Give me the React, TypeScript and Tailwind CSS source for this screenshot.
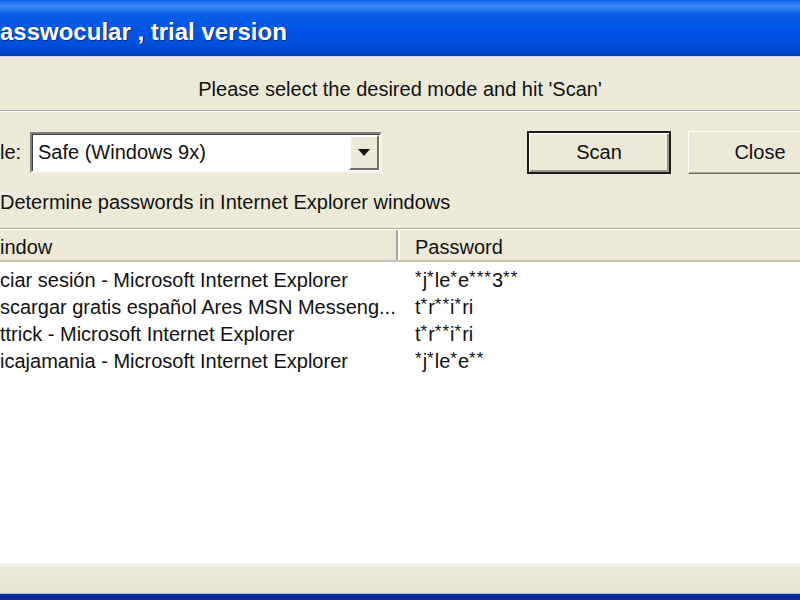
import React from "react";

const rows = [
  { w: "ciar sesión - Microsoft Internet Explorer", p: "*j*le*e***3**" },
  { w: "scargar gratis español Ares MSN Messeng...", p: "t*r**i*ri" },
  { w: "ttrick - Microsoft Internet Explorer", p: "t*r**i*ri" },
  { w: "icajamania - Microsoft Internet Explorer", p: "*j*le*e**" },
];

function Masked({ text }: { text: string }) {
  return (
    <>
      {text.split("").map((c, i) =>
        c === "*" ? (
          <span key={i} className="text-[17px] align-[4px] tracking-[1px]">
            *
          </span>
        ) : (
          <span key={i}>{c}</span>
        )
      )}
    </>
  );
}

export default function App() {
  return (
    <div
      className="w-[800px] h-[600px] overflow-hidden flex flex-col bg-[#ECE9D8] text-[#111]"
      style={{ fontFamily: '"Liberation Sans", Arial, sans-serif' }}
    >
      {/* Title bar */}
      <div className="h-[56px] shrink-0 flex items-center bg-[linear-gradient(to_bottom,#0a5fe6_0px,#3d8cf6_6px,#0a5de8_14px,#0055e5_30px,#0050dd_44px,#0044cc_52px,#003bb8_56px)]">
        <span className="text-white font-bold text-[24px] leading-none pt-[7px] [text-shadow:1px_1px_0_#0a2a80]">
          asswocular , trial version
        </span>
      </div>
      <div className="h-[1px] bg-[#c9d6f0] shrink-0" />

      {/* Instruction */}
      <div className="h-[53px] shrink-0 flex items-end justify-center pb-[11px]">
        <span className="text-[20px] leading-none">Please select the desired mode and hit 'Scan'</span>
      </div>
      <div className="h-[1px] bg-[#aca899] shrink-0" />
      <div className="h-[1px] bg-white shrink-0" />

      {/* Mode row */}
      <div className="flex items-center mt-[19px] h-[42px] shrink-0">
        <span className="text-[20px] leading-none w-[30px] shrink-0">le:</span>
        <div className="w-[352px] h-[41px] shrink-0 flex items-center bg-white border-[2px] border-t-[#808080] border-l-[#808080] border-b-[#f4f3ee] border-r-[#f4f3ee] shadow-[inset_1px_1px_0_#404040]">
          <span className="flex-1 pl-[6px] text-[20px] leading-none">Safe (Windows 9x)</span>
          <div className="w-[30px] h-[35px] mr-[1px] shrink-0 flex items-center justify-center bg-[#ECE9D8] border-[2px] border-t-white border-l-white border-b-[#716f64] border-r-[#716f64]">
            <svg width="12" height="7" viewBox="0 0 12 7">
              <path d="M0 0 H12 L6 7 Z" fill="#111" />
            </svg>
          </div>
        </div>
        <div className="ml-[145px] w-[144px] h-[43px] shrink-0 flex items-center justify-center border-[2px] border-[#1c1c1c] bg-[#ECE9D8] shadow-[inset_1px_1px_0_#fff,inset_-2px_-2px_0_#9a9889]">
          <span className="text-[20px] leading-none">Scan</span>
        </div>
        <div className="ml-[17px] w-[144px] h-[43px] shrink-0 flex items-center justify-center bg-[#ECE9D8] border-[1px] border-t-white border-l-white border-b-[#6f6d63] border-r-[#6f6d63] shadow-[inset_-1px_-1px_0_#aca899]">
          <span className="text-[20px] leading-none">Close</span>
        </div>
      </div>

      {/* Description */}
      <div className="h-[55px] shrink-0 flex items-center">
        <span className="text-[20px] leading-none pt-[2px]">Determine passwords in Internet Explorer windows</span>
      </div>
      <div className="h-[1px] bg-[#aca899] shrink-0" />
      <div className="h-[1px] bg-white shrink-0" />

      {/* List */}
      <div className="flex-1 flex flex-col bg-white min-h-0">
        <div className="h-[32px] shrink-0 flex bg-[#ECE9D8] border-b-[2px] border-[#c7c5b2]">
          <div className="w-[398px] flex items-center border-r-[2px] border-[#aca899] pt-[3px]">
            <span className="text-[20px] leading-none">indow</span>
          </div>
          <div className="flex-1 flex items-center pl-[15px] border-l-[2px] border-white pt-[3px]">
            <span className="text-[20px] leading-none">Password</span>
          </div>
        </div>
        <div className="pt-[4px] flex flex-col">
          {rows.map((r, i) => (
            <div key={i} className="h-[27px] flex items-center">
              <span className="w-[415px] shrink-0 text-[20px] leading-none whitespace-nowrap">{r.w}</span>
              <span className="text-[20px] leading-none whitespace-nowrap">
                <Masked text={r.p} />
              </span>
            </div>
          ))}
        </div>
      </div>

      {/* Bottom */}
      <div className="h-[30px] shrink-0 bg-[linear-gradient(to_bottom,#f7f6ee_0px,#eceadb_5px,#e7e4d0_28px)]" />
      <div className="h-[1px] bg-[#a8c4f0] shrink-0" />
      <div className="h-[6px] bg-[#0a2a9a] shrink-0" />
    </div>
  );
}
